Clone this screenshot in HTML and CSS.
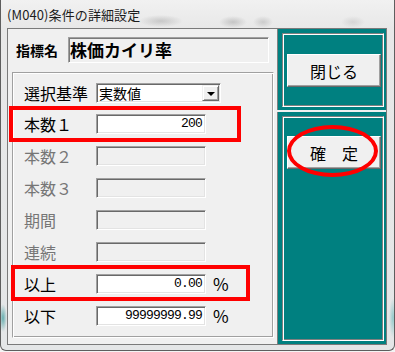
FILE: index.html
```html
<!DOCTYPE html>
<html lang="ja">
<head>
<meta charset="utf-8">
<title>(M040)条件の詳細設定</title>
<link rel="stylesheet" href="styles.css">
</head>
<body>
<div class="window">
  <div class="titlebar"><span class="title">(M040)条件の詳細設定</span></div>
  <div class="client">
    <div class="left">
      <div class="ind-row">
        <span class="ind-label">指標名</span>
        <div class="ind-box">株価カイリ率</div>
      </div>
      <div class="group">
        <div class="row row-first">
          <span class="lbl">選択基準</span>
          <div class="combo"><span class="combo-text">実数値</span><span class="drop"><span class="tri"></span></span></div>
        </div>
        <div class="row">
          <span class="lbl">本数１</span>
          <div class="field">200</div>
        </div>
        <div class="row">
          <span class="lbl dis">本数２</span>
          <div class="field off"></div>
        </div>
        <div class="row">
          <span class="lbl dis">本数３</span>
          <div class="field off"></div>
        </div>
        <div class="row">
          <span class="lbl dis">期間</span>
          <div class="field off"></div>
        </div>
        <div class="row">
          <span class="lbl dis">連続</span>
          <div class="field off"></div>
        </div>
        <div class="row">
          <span class="lbl">以上</span>
          <div class="field">0.00</div>
          <span class="pct">%</span>
        </div>
        <div class="row">
          <span class="lbl">以下</span>
          <div class="field">99999999.99</div>
          <span class="pct">%</span>
        </div>
      </div>
    </div>
    <div class="right">
      <div class="panel panel-top">
        <div class="etch etch-top"><button class="btn">閉じる</button></div>
      </div>
      <div class="panel panel-bottom">
        <div class="etch etch-bottom"><button class="btn">確　定</button></div>
      </div>
    </div>
  </div>
</div>
<div class="mark mark-rect1"></div>
<div class="mark mark-rect2"></div>
<div class="mark mark-ellipse"></div>
</body>
</html>
```
FILE: styles.css
```css
* { box-sizing: border-box; }
html, body { margin: 0; padding: 0; }
body {
  position: relative;
  width: 395px;
  height: 352px;
  overflow: hidden;
  background: #f4f4f4;
  font-family: "Noto Sans CJK JP", "Noto Sans", sans-serif;
  color: #000;
}
.window {
  width: 395px;
  height: 351px;
  border: 1px solid #5e5e5e;
  border-top: none;
  border-radius: 0 0 6px 6px;
  padding: 0 7px 5px 6px;
  background:
    radial-gradient(ellipse 4px 14px at 2px 318px, rgba(0,128,128,0.55), transparent),
    radial-gradient(ellipse 4px 20px at 392px 318px, rgba(0,150,150,0.35), transparent),
    radial-gradient(ellipse 22px 6px at 160px 21px, rgba(110,110,110,0.28), transparent),
    radial-gradient(ellipse 14px 6px at 232px 22px, rgba(110,110,110,0.3), transparent),
    radial-gradient(ellipse 10px 6px at 262px 22px, rgba(110,110,110,0.25), transparent),
    radial-gradient(ellipse 12px 6px at 352px 22px, rgba(130,130,130,0.2), transparent),
    linear-gradient(180deg, #f1f1f1 0, #e8e8e8 28px, #e4e6e7 100%);
}
.titlebar {
  height: 28px;
  display: flex;
  align-items: center;
}
.title {
  font-size: 13px;
  color: #1c1c1c;
  letter-spacing: 0.1px;
}
.client {
  width: 380px;
  height: 317px;
  border: 1px solid #7a7a7a;
  background: #f0f0f0;
  display: flex;
}
.left {
  width: 269px;
  padding-top: 8px;
}
.ind-row {
  display: flex;
  align-items: center;
  height: 26px;
  padding-left: 8px;
}
.ind-label {
  width: 52px;
  font-size: 14px;
  font-weight: bold;
}
.ind-box {
  width: 201px;
  height: 26px;
  border: 1px solid;
  border-color: #a0a0a0 #fff #fff #a0a0a0;
  box-shadow: inset 1px 1px #7a7a7a;
  padding-left: 1px;
  font-size: 17px;
  font-weight: bold;
  line-height: 23px;
}
.group {
  margin: 9px 0 0 4px;
  width: 262px;
  height: 266px;
  border: 1px solid;
  border-color: #a0a0a0 #fff #fff #a0a0a0;
  box-shadow: inset 1px 1px #fff, inset -1px -1px #a0a0a0;
  padding: 10px 0 0 11px;
  display: flex;
  flex-direction: column;
  gap: 12px;
}
.row {
  display: flex;
  align-items: center;
  height: 20px;
}
.row-first { margin-bottom: -1px; }
.lbl {
  width: 72px;
  font-size: 16px;
  line-height: 20px;
}
.lbl.dis { color: #767676; }
.combo {
  width: 125px;
  height: 20px;
  display: flex;
  align-items: center;
  background: #fff;
  border: 1px solid;
  border-color: #a0a0a0 #fff #fff #a0a0a0;
  box-shadow: inset 1px 1px #696969, inset -1px -1px #e3e3e3;
  padding: 0 1px 0 2px;
}
.combo-text {
  flex: 1;
  font-size: 14px;
  line-height: 18px;
}
.drop {
  width: 17px;
  height: 16px;
  background: #f0f0f0;
  border: 1px solid;
  border-color: #f0f0f0 #696969 #696969 #f0f0f0;
  box-shadow: inset 1px 1px #fff, inset -1px -1px #a0a0a0;
  display: flex;
  align-items: center;
  justify-content: center;
}
.tri {
  width: 0;
  height: 0;
  border-left: 4px solid transparent;
  border-right: 4px solid transparent;
  border-top: 4px solid #000;
  margin-top: 1px;
}
.field {
  width: 110px;
  height: 20px;
  background: #fff;
  border: 1px solid;
  border-color: #a0a0a0 #fff #fff #a0a0a0;
  box-shadow: inset 1px 1px #696969, inset -1px -1px #e3e3e3;
  font-family: "Liberation Mono", "DejaVu Sans Mono", monospace;
  font-size: 13px;
  letter-spacing: -0.8px;
  line-height: 18px;
  text-align: right;
  padding-right: 3px;
}
.field.off { background: #f0f0f0; }
.pct {
  margin-left: 7px;
  font-size: 17px;
  line-height: 20px;
}
.right {
  width: 109px;
  display: flex;
  flex-direction: column;
  gap: 2px;
}
.panel {
  background: #008080;
  border-left: 1px solid #808080;
  padding: 4px 2px 3px 4px;
}
.panel-top { height: 81px; }
.panel-bottom { flex: 1; }
.etch {
  height: 100%;
  border: 1px solid;
  border-color: #808080 #fff #fff #808080;
  box-shadow: inset 1px 1px #fff, inset -1px -1px #808080;
  padding: 0 2px 0 4px;
}
.etch-top { padding-top: 20px; }
.etch-bottom { padding-top: 19px; }
.btn {
  display: block;
  width: 100%;
  height: 33px;
  margin: 0;
  padding: 0;
  background: #f0f0f0;
  border: 1px solid;
  border-color: #fff #696969 #696969 #fff;
  box-shadow: inset -1px -1px #a0a0a0;
  font-family: "Noto Sans CJK JP", sans-serif;
  font-size: 16px;
  color: #000;
}
.mark {
  position: absolute;
  border: 4px solid #f00;
}
.mark-rect1 { left: 9px; top: 106px; width: 232px; height: 36px; }
.mark-rect2 { left: 11px; top: 265px; width: 239px; height: 36px; }
.mark-ellipse { left: 287px; top: 125px; width: 91px; height: 52px; border-radius: 50%; }
```
